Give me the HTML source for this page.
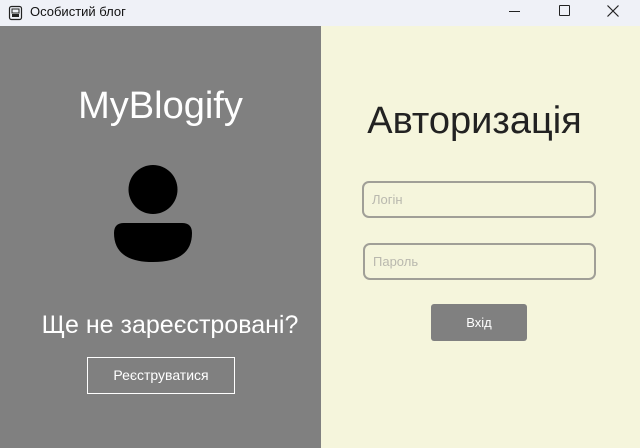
<!DOCTYPE html>
<html><head><meta charset="utf-8"><style>
*{margin:0;padding:0;box-sizing:border-box}
body{width:640px;height:448px;overflow:hidden;font-family:"Liberation Sans","DejaVu Sans",sans-serif;position:relative;background:#f5f5dc}
.t{position:absolute;left:0;top:0;width:640px;height:26px;background:#eff1f7}
.l{position:absolute;left:0;top:26px;width:321px;height:422px;background:#808080}
.r{position:absolute;left:321px;top:26px;width:319px;height:422px;background:#f5f5dc}
.a{position:absolute;white-space:nowrap}
.in{position:absolute;border:2px solid #a09f97;border-radius:7px;height:37px;color:#b9b8ae;font-size:13px;padding:9px 0 0 8px}
</style></head><body>
<div class="t"></div>
<svg class="a" style="left:8px;top:5px" width="16" height="16" viewBox="0 0 16 16"><rect x="1.5" y="1.5" width="12" height="13" rx="2" fill="none" stroke="#222" stroke-width="1.2"/><rect x="4" y="4" width="7" height="4" fill="none" stroke="#222"/><rect x="4" y="9" width="7" height="3" fill="#222"/></svg>
<div class="a" style="left:30px;top:4px;font-size:13px;color:#111">Особистий блог</div>
<div class="a" style="left:509px;top:11px;width:11px;height:1px;background:#222"></div>
<div class="a" style="left:559px;top:5px;width:11px;height:11px;border:1px solid #222;border-radius:1px"></div>
<svg class="a" style="left:606px;top:4px" width="14" height="14"><path d="M1.5 1.5L12.5 12.5M12.5 1.5L1.5 12.5" stroke="#222" stroke-width="1.2"/></svg>
<div class="l"></div><div class="r"></div>
<div class="a" style="left:0;width:321px;text-align:center;top:85px;font-size:38px;color:#fff">MyBlogify</div>
<svg class="a" style="left:0;top:0" width="321" height="300"><circle cx="153" cy="189.5" r="24.5" fill="#000"/><path d="M114 233Q114 223 124 223L182 223Q192 223 192 233Q192 262 153 262Q114 262 114 233Z" fill="#000"/></svg>
<div class="a" style="left:0;width:340px;text-align:center;top:311px;font-size:25px;color:#fff">Ще не зареєстровані?</div>
<div class="a" style="left:87px;top:357px;width:148px;height:37px;border:1px solid #fff;color:#fff;font-size:14px;text-align:center;line-height:35px">Реєструватися</div>
<div class="a" style="left:315px;width:319px;text-align:center;top:100px;font-size:38px;color:#222">Авторизація</div>
<div class="in" style="left:362px;top:181px;width:234px">Логін</div>
<div class="in" style="left:363px;top:243px;width:233px">Пароль</div>
<div class="a" style="left:431px;top:304px;width:96px;height:37px;background:#808080;border-radius:3px;color:#fff;font-size:13px;text-align:center;line-height:37px">Вхід</div>
</body></html>
